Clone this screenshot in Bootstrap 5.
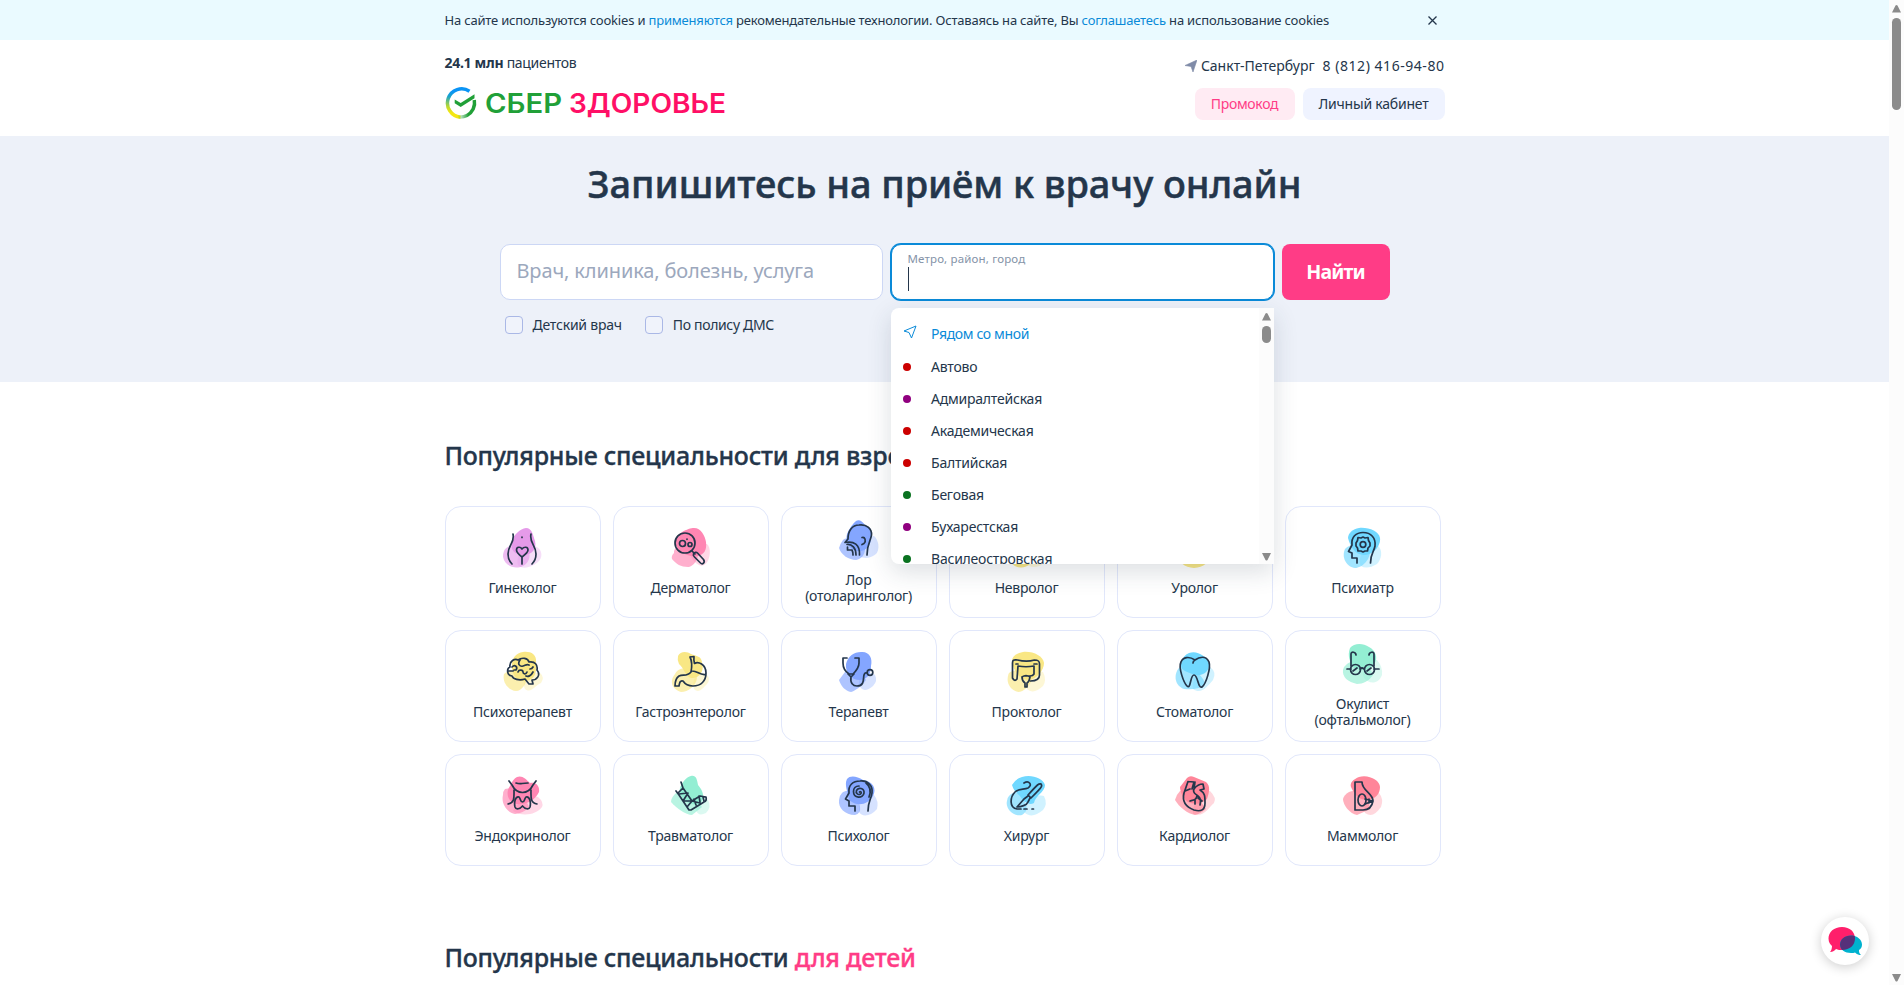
<!DOCTYPE html>
<html lang="ru">
<head>
<meta charset="utf-8">
<meta name="viewport" content="width=device-width, initial-scale=1">
<title>СберЗдоровье</title>
<link href="https://cdn.jsdelivr.net/npm/bootstrap@5.3.0/dist/css/bootstrap.min.css" rel="stylesheet">
<style>
:root{--ink:#24364b;--blue:#0a8ad8;--pink:#ff3c86}
html,body{height:100%;overflow:hidden}
body{font-family:"Noto Sans","Open Sans",sans-serif;font-size:14px;line-height:20px;color:var(--ink);background:#fff}
.viewport-area{width:1889px;height:985px;overflow:hidden}
.wrap{width:1000px;margin:0 auto}
.t{white-space:nowrap;display:inline-block;letter-spacing:-.22px}
.cookie{height:40px;background:#eafaff;font-size:13px}
.cookie .t{letter-spacing:-.19px}
.cookie a{color:var(--blue);text-decoration:none}
.cookie svg{margin-right:8px}
.top{height:96px}
.patients{padding-top:13px}
.patients .t{letter-spacing:-.3px}
.logo{margin-top:14px}
.contacts{padding-top:16px}
.contacts .city{letter-spacing:0;margin:0 8px 0 4px}
.contacts .phone{letter-spacing:.54px}
.pill{height:32px;border-radius:8px;padding:0;border:0;font-size:14px;line-height:20px}
.pill-promo{width:100px;background:#ffebf3;color:var(--pink)}
.pill-promo .t{letter-spacing:-.3px}
.pill-user{width:142px;background:#eff3ff;color:var(--ink)}
.hero{height:246px;background:#edf1f9}
.hero h1{font-size:38px;line-height:48px;font-weight:500;margin:0;padding-top:23px;-webkit-text-stroke:.5px}
.hero h1 .t{letter-spacing:-.08px}
.search{width:890px;margin:37px auto 0}
.field{width:383px;height:56px;background:#fff;border:1px solid #ccd7f5;border-radius:10px;padding:0 16px;font-size:20px}
.field-off{color:#9ca8bd;padding-bottom:2px}
.field-off .t{letter-spacing:-.13px}
.field-on{border-color:var(--blue);box-shadow:0 0 0 1px var(--blue)}
.field-on .cap{font-size:11.5px;line-height:14px;color:#8593a8;padding-top:7px}
.field-on .cap .t{letter-spacing:.16px}
.caret{width:1px;height:24px;background:var(--ink);margin-top:1px}
.find{width:108px;height:56px;border-radius:8px;background:var(--pink);color:#fff;font-weight:700;font-size:19.5px;border:0}
.find .t{letter-spacing:-.9px}
.checks{padding:15px 0 0 5px}
.checks .t{margin:0 23px 0 10px}
.box{width:18px;height:18px;border:1px solid #aab8e6;border-radius:4px;background:#f0f3fb}
.checks .t:last-child{letter-spacing:-.34px}
.drop{position:absolute;left:391px;top:64px;width:383px;height:256px;background:#fff;border-radius:8px 0 0 8px;box-shadow:0 8px 24px rgba(36,54,75,.16);z-index:5}
.drop ul{height:256px;overflow:hidden;margin:0;padding:8px 0 0;border-radius:8px 0 0 8px}
.drop li{height:32px;padding-left:12px}
.drop li:first-child{height:35px;color:var(--blue)}
.drop li:first-child .t{letter-spacing:-.36px}
.drop li svg{margin:-4px 14.5px 0 0}
.dot{width:8px;height:8px;border-radius:50%;margin-right:20.5px}
.rd{background:#c00}.pu{background:#90007f}.gr{background:#0a7220}
.bar{position:absolute;right:0;top:0;width:15px;height:100%;background:#fcfcfc}
h2{font-size:25px;line-height:32px;font-weight:500;margin:0;-webkit-text-stroke:.35px}
h2 .t{letter-spacing:-.24px}
.adults{padding-top:57px}
.kids{padding-top:75px}
.spec{display:grid;grid-template-columns:repeat(6,156px);gap:12px;margin-top:35px}
.tile{height:112px;border:1px solid #e1e7fb;border-radius:16px;text-align:center;line-height:16px;gap:12px}
.tile svg{width:40px;height:40px;overflow:visible}
.tile .g{fill:none;stroke:var(--ink);stroke-width:1.7;stroke-linecap:round;stroke-linejoin:round}
.b2{opacity:.66}.b3{opacity:.33}
.c-pu{fill:#e59ae9}.c-pk{fill:#ff86b3}.c-bl{fill:#84a6ff}.c-ye{fill:#f9e784}.c-cy{fill:#70d8ff}.c-gr{fill:#93eed3}.c-rd{fill:#ff8599}
.chat{position:fixed;left:1821px;top:917px;width:48px;height:48px;border-radius:50%;background:#fff;box-shadow:0 2px 12px rgba(0,0,0,.2)}
.page-bar{position:fixed;left:1889px;top:0;width:15px;height:985px;background:#fcfcfc}
</style>
</head>
<body>
<div class="viewport-area">
<div class="cookie"><div class="wrap h-100 d-flex align-items-center justify-content-between">
<span class="t">На сайте используются cookies и <a href="#">применяются</a> рекомендательные технологии. Оставаясь на сайте, Вы <a href="#">соглашаетесь</a> на использование cookies</span>
<svg width="9" height="9" viewBox="0 0 9 9"><path d="M.5.5l8 8M8.500.5l-8 8" stroke="#24364b" stroke-width="1.300"/></svg>
</div></div>
<header class="top"><div class="wrap d-flex justify-content-between">
<div>
<div class="patients"><span class="t"><b>24.1 млн</b> пациентов</span></div>
<svg class="logo d-block" width="290" height="34" viewBox="0 0 290 34">
<defs><linearGradient id="lg" x1=".3" y1="0" x2=".15" y2="1"><stop offset=".1" stop-color="#0a94f5"/><stop offset=".3" stop-color="#1aa3c8"/><stop offset=".65" stop-color="#b9d931"/><stop offset=".85" stop-color="#f5e713"/></linearGradient><linearGradient id="lh" x1="0" y1="0" x2="1" y2="0"><stop offset=".3" stop-color="#21a038" stop-opacity="0"/><stop offset=".75" stop-color="#21a038"/></linearGradient></defs>
<path d="M24.500 4.200A14.200 14.200 0 1 0 15.500 30.200" fill="none" stroke="url(#lg)" stroke-width="3.500"/>
<path d="M5 25.500A14.200 14.200 0 0 0 29.300 13" fill="none" stroke="url(#lh)" stroke-width="3.500"/>
<path d="M9.700 12.500l6 3.600L29.500 7.200v4L15.700 20l-6-3.700z" fill="#21a038"/>
<text x="40" y="26" font-family="Inter,sans-serif" font-weight="600" font-size="26.500" textLength="77" lengthAdjust="spacingAndGlyphs" fill="#21a038">СБЕР</text>
<text x="124" y="26" font-family="Inter,sans-serif" font-weight="600" font-size="26.500" textLength="157" lengthAdjust="spacingAndGlyphs" fill="#ff0f66">ЗДОРОВЬЕ</text>
</svg>
</div>
<div class="contacts d-flex flex-column align-items-end">
<div class="d-flex align-items-center"><svg width="12" height="12" viewBox="0 0 12 12"><path d="M12 0L8 12 6 6.500 0 5.500z" fill="#7f8ba8" stroke="#7f8ba8" stroke-width=".6" stroke-linejoin="round"/></svg><span class="t city">Санкт-Петербург</span><span class="t phone">8 (812) 416-94-80</span></div>
<div class="d-flex gap-2 pt-1 mt-2"><button class="btn pill pill-promo"><span class="t">Промокод</span></button><button class="btn pill pill-user"><span class="t">Личный кабинет</span></button></div>
</div>
</div></header>
<section class="hero text-center"><h1><span class="t">Запишитесь на приём к врачу онлайн</span></h1>
<div class="search text-start position-relative">
<div class="d-flex gap-2">
<div class="field field-off d-flex align-items-center"><span class="t">Врач, клиника, болезнь, услуга</span></div>
<div class="field field-on"><div class="cap"><span class="t">Метро, район, город</span></div><div class="caret"></div></div>
<button class="find"><span class="t">Найти</span></button>
</div>
<div class="checks d-flex align-items-center"><span class="box"></span><span class="t">Детский врач</span><span class="box"></span><span class="t">По полису ДМС</span></div>
<div class="drop"><ul class="list-unstyled">
<li class="d-flex align-items-center"><svg width="14" height="14" viewBox="0 0 14 14"><path d="M13 1L8.500 13 6 7.500 1 6z" fill="none" stroke="#0a8ad8" stroke-linejoin="round"/></svg><span class="t">Рядом со мной</span></li>
<li class="d-flex align-items-center"><i class="dot rd"></i><span class="t">Автово</span></li>
<li class="d-flex align-items-center"><i class="dot pu"></i><span class="t">Адмиралтейская</span></li>
<li class="d-flex align-items-center"><i class="dot rd"></i><span class="t">Академическая</span></li>
<li class="d-flex align-items-center"><i class="dot rd"></i><span class="t">Балтийская</span></li>
<li class="d-flex align-items-center"><i class="dot gr"></i><span class="t">Беговая</span></li>
<li class="d-flex align-items-center"><i class="dot pu"></i><span class="t">Бухарестская</span></li>
<li class="d-flex align-items-center"><i class="dot gr"></i><span class="t">Василеостровская</span></li>
</ul><svg class="bar" viewBox="0 0 15 256"><path d="M3 12.500l3.500-7q1-1 2 0l3.500 7zM3 245l3.500 7q1 1 2 0l3.500-7z" fill="#8b8b8b"/><rect x="3" y="18" width="9" height="17" rx="4.500" fill="#8b8b8b"/></svg></div>
</div></section>
<main class="wrap">
<h2 class="adults"><span class="t">Популярные специальности</span> <span class="t">для взрослых</span></h2>
<div class="spec">
<div class="tile d-flex flex-column align-items-center justify-content-center"><svg viewBox="0 0 40 40"><g class="c-pu"><path class="b3" d="M15 37C12 25 24 17 32 18C40 21 40 30 35 34C27 41 18 41 15 37"/><path class="b2" d="M1 23C4 16 18 15 24 21C29 27 26 35 20 38C12 42 2 38 0 29Q0 25 1 23"/><path d="M23 0C29 0 30 7 32 13C34 21 29 27 20 27C12 27 7 22 9 14C11 6 17 1 23 0"/></g><path class="g" d="M10 6C12 15 5 17 5 26Q5 32 9 36M28 6C26 15 33 17 33 26Q33 32 29 36M19 9v.5M19 29C15 26 13.500 24 13.500 22C13.500 18.500 17.500 18.500 19 21C21 18.500 25 18.500 25 22C25 24 23 26 19 29V36"/></svg><span class="t">Гинеколог</span></div>
<div class="tile d-flex flex-column align-items-center justify-content-center"><svg viewBox="0 0 40 40"><g class="c-pk"><path class="b3" d="M20 29C22 15 33 13 37 17C41 23 38 35 33 37Q27 40 20 29"/><path class="b2" d="M3 25C2 16 20 14 27 22C29 29 23 39 17 39C10 39 5 36 1 31Q0 28 3 25"/><path d="M23 0C30 0 34 8 35 14C36 22 33 27 26 28C17 30 4 22 4 14C4 6 17 0 23 0"/></g><path class="g" d="M21 23l3 3M22.500 26c1-2 3-2 4-1l6 6.500c2 3-1 5.500-3 3.500l-6-6c-1-1-1.500-2-1-3M16 11v.3"/><circle class="g" cx="14" cy="15" r="10"/><circle class="g" cx="11.500" cy="15.500" r="3"/><circle class="g" cx="19" cy="16.500" r="2"/></svg><span class="t">Дерматолог</span></div>
<div class="tile d-flex flex-column align-items-center justify-content-center"><svg viewBox="0 0 40 40"><g class="c-bl"><path class="b3" d="M20 36C18 27 27 16 35 16C40 20 41 30 37 34Q28 41 20 36"/><path class="b2" d="M4 20C10 15 24 20 26 29C26 35 22 39 17 40C10 40 2 35 0 28Q1 24 4 20"/><path d="M17 1C20-1 23 1 26 5C32 7 34 12 32 20C30 29 24 32 18 31C10 29 6 22 8 14Q12 5 17 1"/></g><path class="g" d="M9 19C9 11 13 5 20 5C28 4 33 9 32.500 15C32 20 28 24 28 35M9 19L6 22.500C15 21 21 24 20.500 35M8 24.500C13 24 17 28 17 35M8.500 27V30H13Q14 32 14 35M23 17.500C26 16.500 27.500 21 25 23.500L23 24.500"/></svg><span class="t">Лор<br>(отоларинголог)</span></div>
<div class="tile d-flex flex-column align-items-center justify-content-center"><svg viewBox="0 0 40 40"><g class="c-ye"><ellipse cx="14" cy="27" rx="13" ry="12.500"/><ellipse class="b3" cx="27" cy="28" rx="12" ry="11"/></g></svg><span class="t">Невролог</span></div>
<div class="tile d-flex flex-column align-items-center justify-content-center"><svg viewBox="0 0 40 40"><g class="c-ye"><ellipse cx="19" cy="25" rx="17" ry="15"/></g></svg><span class="t">Уролог</span></div>
<div class="tile d-flex flex-column align-items-center justify-content-center"><svg viewBox="0 0 40 40"><g class="c-cy"><path class="b3" d="M18 38C13 28 24 16 34 17C41 22 38 32 34 36Q24 42 18 38"/><path class="b2" d="M2 21C7 15 23 14 27 22C28 31 19 40 12 40C4 39-2 30 2 21"/><path d="M16 0C25-1 36 3 37 10C38 17 31 27 21 27C12 27 7 18 5 10C5 5 10 1 16 0"/></g><path class="g" d="M14 35V30H9V25L5.500 23.500L9 17C8 9 13 4.500 20 4.500C28 4.500 33 10 32 18C31 24 27.500 25 27.500 35"/><path class="g" d="M20 9l2 1 3-.5.5 3L27 15v3l-2 2-.5 3H22l-2 1-2-1h-3l-.5-3-1.500-2v-3l1.500-2.500.5-3 3 .5z"/><circle class="g" cx="20" cy="16.500" r="2.800"/></svg><span class="t">Психиатр</span></div>

<div class="tile d-flex flex-column align-items-center justify-content-center"><svg viewBox="0 0 40 40"><g class="c-ye"><path class="b3" d="M22 37C18 27 25 20 37 21Q42 25 38 31C31 34 28 42 22 37"/><path class="b2" d="M1 22C7 16 20 17 25 24C23 32 19 39 13 39C5 38-1 30 1 22"/><path d="M20 0C27-1 34 2 33 10C34 20 32 28 23 29C14 30 8 22 9 13C9 6 13 1 20 0"/></g><path class="g" d="M9 24C3 23 4 16 7 15C6 9 12 6 15 8C19 5 25 6 26 10C32 9 35 13 34 18C38 23 34 28 29 28L30 32H26L22 27C16 29 10 27 9 24M9 15c3-3 6 0 4 3h-2M17 8c-3 4 0 7 3 6s4-2 6-1M15 20c1-3 5-2 5 0s3 3 4 0M6 19h4M23 24c2 1 5 0 7-4M27 17q2 0 3-2"/></svg><span class="t">Психотерапевт</span></div>
<div class="tile d-flex flex-column align-items-center justify-content-center"><svg viewBox="0 0 40 40"><g class="c-ye"><path class="b3" d="M23 37C20 27 27 17 36 23Q40 27 36 32C32 36 28 42 23 37"/><path class="b2" d="M4 22C9 12 24 17 26 26C25 34 17 40 10 40C3 38-3 31 4 22"/><path d="M7 4C9-1 16-1 20 2C25 4 31 4 31 11C34 20 27 27 20 26C14 24 13 16 8 12Q6 8 7 4"/></g><path class="g" d="M19 5L23 4.500Q22.500 8 23.500 11.500C27 9 35 12 35 21C35 29 30 34 22 34C17 34 14 32 12 29C9 28 8.500 31 8 34H4C4 29 5 26 8 24C12 22 16 25 20 20C21 15 21 9 19 5M21 19C27 19 28 23 34 22.500"/></svg><span class="t">Гастроэнтеролог</span></div>
<div class="tile d-flex flex-column align-items-center justify-content-center"><svg viewBox="0 0 40 40"><g class="c-bl"><path class="b3" d="M20 32C19 23 30 18 36 23Q39 29 34 34C27 40 22 39 20 32"/><path class="b2" d="M6 20C13 16 23 21 27 28C23 34 16 39 12 40C6 39 2 34 0 28Z"/><path d="M22 0C30-1 34 6 32 14C32 23 28 27 21 28C12 28 6 20 7 12C9 4 15 0 22 0"/></g><path class="g" d="M8 6H4v5c0 6 3 9 6 11h4c3-3 6-6 6-11V6h-4M9 22l3 3 3-3M12 25c-1 6 2 9 6 9 8 0 6-8 7-11q1-3 3-2"/><circle class="g" cx="31" cy="20.500" r="2.800"/></svg><span class="t">Терапевт</span></div>
<div class="tile d-flex flex-column align-items-center justify-content-center"><svg viewBox="0 0 40 40"><g class="c-ye"><path class="b3" d="M20 37C16 26 29 18 36 20Q40 28 36 34C30 40 24 41 20 37"/><path class="b2" d="M2 21C9 15 22 19 25 28C22 34 17 40 11 40C3 38-2 30 2 21"/><path d="M16 0C26-1 36 4 37 11C37 18 30 27 22 28C12 28 6 18 5 9C5 4 10 1 16 0"/></g><path class="g" d="M5.500 26V11c0-4 2-3 5-3 6 1.500 12 1.500 17 0 4 0 5 1 5 4v11c0 5-4 6-9 6M5.500 26q2 4 4.500 1L11 14q8 1.500 16 0v8q-1 2-4 2H17M9 12h2M27 12h3M15 25q4-3 8 0-1 5-3 6v4h-2v-4q-3-2-3-6"/></svg><span class="t">Проктолог</span></div>
<div class="tile d-flex flex-column align-items-center justify-content-center"><svg viewBox="0 0 40 40"><g class="c-cy"><path class="b3" d="M18 37C16 26 28 15 35 15Q42 20 38 28C32 35 26 43 18 37"/><path class="b2" d="M5 15C14 14 29 22 30 33C24 37 17 38 9 37C-2 33-1 20 5 15"/><path d="M14 1C22-2 31 4 34 11C35 19 29 24 20 23C13 20 5 19 6 12Q8 3 14 1"/></g><path class="g" d="M20 8C14 4 8 5 6 10c-3 6 3 21 6 24 4 4 3-11 7-11s4 14 8 12c4-3 9-19 7-25-3-7-10-5-14-2q-2 1-2 3"/></svg><span class="t">Стоматолог</span></div>
<div class="tile d-flex flex-column align-items-center justify-content-center"><svg viewBox="0 0 40 40"><g class="c-gr"><path class="b3" d="M21 34C17 24 28 15 34 16Q40 23 39 31C35 41 26 40 21 34"/><path class="b2" d="M4 20C13 13 27 20 30 31C26 37 20 40 14 40C5 38-1 33 0 26Q1 22 4 20"/><path d="M7 4C11-1 20-1 26 3C32 6 36 14 31 20C25 28 18 26 11 24C7 18 4 12 7 4"/></g><path class="g" d="M8 22V10c0-3 5-2 5 1M31 22V10c0-3-5-2-5 1M4 25h4M31 25h5M17 25q2-2 4 0M10 27l4-3M24 27l4-3"/><circle class="g" cx="12.500" cy="25.500" r="5"/><circle class="g" cx="26.500" cy="25.500" r="5"/></svg><span class="t">Окулист<br>(офтальмолог)</span></div>

<div class="tile d-flex flex-column align-items-center justify-content-center"><svg viewBox="0 0 40 40"><g class="c-pk"><path class="b3" d="M10 35C14 25 28 19 35 21Q41 26 39 31C33 39 19 41 10 35"/><path class="b2" d="M2 13C9 10 22 19 26 31Q21 37 12 38C3 36-2 27 0 19Q0 15 2 13"/><path d="M14 1C19-1 23 3 27 7C32 6 37 9 36 16C32 25 22 29 13 28C5 26 2 17 7 10Q10 3 14 1"/></g><path class="g" d="M6 5L9 9C14 19 25 19 30 9L33 5M13 7q3 1 6 .500t6-.5M11 14C11 21 12 27 5 28M28 14C28 21 27 27 34 28M16 21C12 20 11 27 12 31C13 34 17 33 19.500 30C22 33 26 34 27 31C28 27 27 20 23 21C21 23 22 26 19.500 26C17 26 18 23 16 21"/></svg><span class="t">Эндокринолог</span></div>
<div class="tile d-flex flex-column align-items-center justify-content-center"><svg viewBox="0 0 40 40"><g class="c-gr"><path class="b3" d="M25 34C23 25 31 19 37 24Q41 31 35 37Q27 41 25 34"/><path class="b2" d="M4 18C11 12 24 21 31 31Q26 35 21 39C15 39 5 32 0 26Q0 22 4 18"/><path d="M20 0C25-1 26 3 27 9C32 15 34 20 30 27C22 31 13 26 9 18C7 10 15 1 20 0"/></g><path class="g" d="M10 6l2 6 9 13 8-5 6 1q1 4-2 5l-13 8h-2L8 19l-3-4M12 12l-5 5M8 18l9-1-5 8 9 0-5 6M21 25l8 2M23 23l2 6M28 20l1 6M32 21l1 4"/></svg><span class="t">Травматолог</span></div>
<div class="tile d-flex flex-column align-items-center justify-content-center"><svg viewBox="0 0 40 40"><g class="c-bl"><path class="b3" d="M20 36C19 24 29 17 35 19Q40 25 38 33C31 41 23 41 20 36"/><path class="b2" d="M3 17C10 11 20 20 21 30Q22 38 16 39C6 39-1 32 0 24Q0 20 3 17"/><path d="M8 3C11-1 18 0 24 4C34 5 38 13 34 20C29 29 18 31 10 24C9 16 5 9 8 3"/></g><path class="g" d="M16 35V30H10V25L6.500 23L10 17C9 9 14 5 21 5C29 4 34 10 33 17C32 24 29 25 29 35M27 7c5 4 5 9 3 14"/><path class="g" stroke-width="1.500" d="M20.500 16c1.500-1 2.500 1 1 2-2.500 1.500-5-1-4-3.500 2-4 8-2 7.500 2.500-1 6-10.500 5.500-10.500-1.500 0-3 2-5.500 5.500-5.500"/></svg><span class="t">Психолог</span></div>
<div class="tile d-flex flex-column align-items-center justify-content-center"><svg viewBox="0 0 40 40"><g class="c-cy"><path class="b3" d="M18 37C15 26 30 17 37 20Q41 28 36 34C29 40 23 41 18 37"/><path class="b2" d="M2 20C8 13 16 18 19 29Q21 35 15 39C6 41-2 32 0 25Q0 22 2 20"/><path d="M15 1C24-2 36 2 38 9C38 16 28 20 27 27Q21 30 15 23C13 18 7 17 5 9Q8 3 15 1"/></g><path class="g" d="M17 7c5-3 9 2 4 5-4 2-9 0-13 4-5 5-6 16 2 17h4M17 33h3M25 33h1.500M34 8c-2-1-3 0-13 11l3 3c10-10 12-12 10-14M21 20l-4 3-7 8c4 0 10-2 11-5l2-4"/></svg><span class="t">Хирург</span></div>
<div class="tile d-flex flex-column align-items-center justify-content-center"><svg viewBox="0 0 40 40"><g class="c-rd"><path class="b3" d="M18 38C17 26 28 16 35 15Q42 22 39 27C34 31 29 42 18 38"/><path class="b2" d="M5 15C15 15 26 24 31 33Q25 38 20 39C13 38 4 31 0 24Q1 19 5 15"/><path d="M12 2Q15-1 19 1L31 6C36 10 34 17 32 23C27 28 20 29 13 26C8 23 5 15 5 11Z"/></g><path class="g" d="M13 5.500L9 17C7 25 11 31 19 34C26 36 30 34 30 27C30 20 30 17 25 14L29 13 28 8C24 8 22 9 19 13L20 6M13 5.500L19 6 17 13M10 15l5-2M19 13c-2 4 2 5 4 7 3 2 3 5 2 9M22 20c-1 4-3 4-7 5M20 24v4M23 22l4 3"/></svg><span class="t">Кардиолог</span></div>
<div class="tile d-flex flex-column align-items-center justify-content-center"><svg viewBox="0 0 40 40"><g class="c-rd"><path class="b3" d="M22 37C18 26 29 18 36 17Q41 23 38 31C32 39 28 41 22 37"/><path class="b2" d="M6 16C15 12 26 21 27 33Q21 36 14 39C7 38 0 29 0 23Q1 19 6 16"/><path d="M16 1C25-2 37 4 37 11C37 19 31 24 24 23C17 25 12 19 9 13C5 7 11 3 16 1"/></g><path class="g" d="M12 6H19C19 15 30 17 30 25C29 31 25 34 20 34H12ZM22 23l8 2-8 3M26 23v4"/><ellipse class="g" cx="19" cy="24" rx="4" ry="6"/></svg><span class="t">Маммолог</span></div>
</div>
<h2 class="kids"><span class="t">Популярные специальности</span> <span class="t" style="color:var(--pink)">для детей</span></h2>
</main>
</div>
<div class="chat"><svg width="48" height="48" viewBox="0 0 48 48"><path d="M21 10C13 10 7.500 15 7.500 21.500c0 4 2 6 3.500 7.500 0 3-1 5-2 6 3 0 5-2 6-3 2 1 4 1 6 1C29 33 34 28 34 21.500S29 10 21 10" fill="#ff1f6b"/><path d="M30 18.500c-6 0-11 4-11 9s5 8.500 11 8.500c2 0 3 0 4-.5 2 2 4 2.500 6 2.500-2-2-2-3-2-5 2-1 3-3 3-5.500 0-5-5-9-11-9" fill="#00b2cf"/><path d="M33.700 18.900C25 17 19 22 19 27.500c0 2 1 4 2 5.500 8 0 13-5 13-11.500q0-1.500-.3-2.600z" fill="#56307a"/></svg></div>
<svg class="page-bar" viewBox="0 0 15 985"><path d="M3 12.500l3.500-7q1-1 2 0l3.500 7zM3 974l3.500 7q1 1 2 0l3.500-7z" fill="#8b8b8b"/><rect x="3" y="18" width="9" height="92" rx="4.500" fill="#8b8b8b"/></svg>
<script src="https://cdn.jsdelivr.net/npm/bootstrap@5.3.0/dist/js/bootstrap.bundle.min.js"></script>
</body>
</html>
